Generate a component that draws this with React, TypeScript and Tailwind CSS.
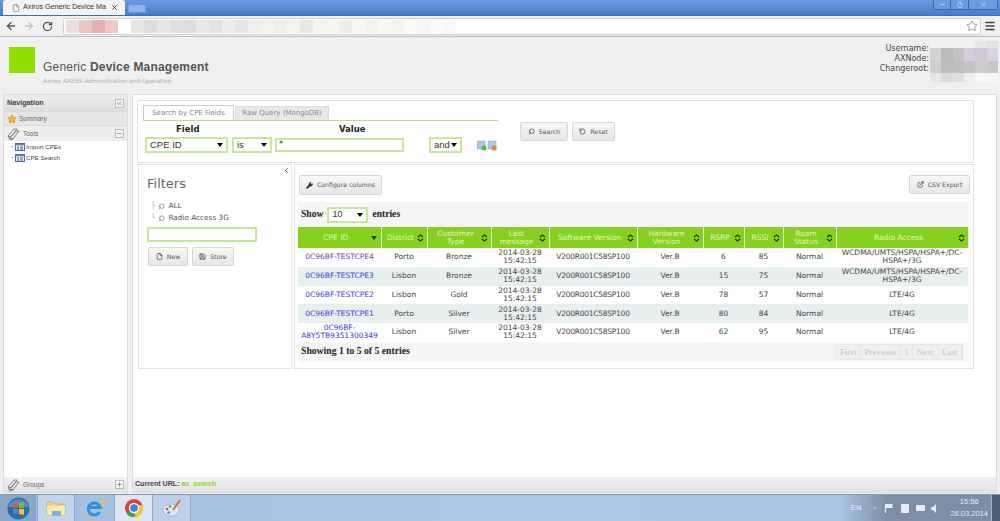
import { ArrowLeft, ArrowRight, RotateCw, Star, Search, RotateCcw, Wrench, File, Save, ExternalLink, Menu, Minus, Plus, ChevronsLeft, ChevronLeft, X, ChevronUp } from "lucide-react"

const rows = [
  { id: ["0C96BF-TESTCPE4"], district: "Porto", type: "Bronze", rsrp: "6", rssi: "85", radio: ["WCDMA/UMTS/HSPA/HSPA+/DC-", "HSPA+/3G"], visited: true },
  { id: ["0C96BF-TESTCPE3"], district: "Lisbon", type: "Bronze", rsrp: "15", rssi: "75", radio: ["WCDMA/UMTS/HSPA/HSPA+/DC-", "HSPA+/3G"] },
  { id: ["0C96BF-TESTCPE2"], district: "Lisbon", type: "Gold", rsrp: "78", rssi: "57", radio: ["LTE/4G"] },
  { id: ["0C96BF-TESTCPE1"], district: "Porto", type: "Silver", rsrp: "80", rssi: "84", radio: ["LTE/4G"] },
  { id: ["0C96BF-", "A8Y5TB9351300349"], district: "Lisbon", type: "Silver", rsrp: "62", rssi: "95", radio: ["LTE/4G"] },
]

const columns = [
  { label: ["CPE ID"], w: "w-[83px]", sorted: true },
  { label: ["District"], w: "w-[46px]" },
  { label: ["Customer", "Type"], w: "w-[64px]" },
  { label: ["Last", "message"], w: "w-[58px]" },
  { label: ["Software Version"], w: "w-[88px]" },
  { label: ["Hardware", "Version"], w: "w-[66px]" },
  { label: ["RSRP"], w: "w-[41px]" },
  { label: ["RSSI"], w: "w-[39px]" },
  { label: ["Roam", "Status"], w: "w-[53px]" },
  { label: ["Radio Access"], w: "w-[132px]" },
]

// blurred address in the url bar
const urlBlur = ["#ecdcdc", "#ecc4c4", "#e4b0b4", "#eccaca", "#ffffff", "#e6e6e4", "#dcdcda", "#e6e6e4", "#dededc", "#dcdcda", "#e8e8e6", "#e2e2e0", "#eeedea", "#e6e6e4", "#f0efec", "#f3f2ee", "#eeeeea", "#f4f3f0", "#e8e8e4", "#f4f4f0", "#f6f5f2", "#eeeeea", "#f8f7f4", "#f2f2ee", "#f8f8f4", "#f4f4f0", "#fafaf6", "#f6f6f2", "#fafaf8", "#f8f8f6"]
// blurred account values in the header
const userBlur = [
  "#f0f0f0", "#f0f0f0", "#eeeeee", "#f0f0f0", "#e8e8e8", "#e2e2e2",
  "#d4d4d4", "#bcbabc", "#c4c2c4", "#d4ccda", "#cfc6d8", "#d8d3de",
  "#d0ced0", "#bebcbe", "#c0bec0", "#c4c4c4", "#cccacc", "#c8c6c8",
  "#e6e6e6", "#dcdcdc", "#dedede", "#efefef", "#f6f6f6", "#f6f6f6",
]

function Sort({ down }: { down?: boolean }) {
  if (down) return <span className="absolute right-[4px] top-1/2 -mt-[2px] w-0 h-0 border-x-[3px] border-x-transparent border-t-[4px] border-t-[#1f3300]" />
  return (
    <svg className="absolute right-[3px] top-1/2 -mt-[4px]" width="7" height="8" viewBox="0 0 7 8" fill="none" stroke="#1f3300" strokeWidth="1.3">
      <path d="M1 3l2.500-2L6 3M1 5l2.500 2L6 5" />
    </svg>
  )
}

function Caret() {
  return <span className="w-0 h-0 border-x-[3px] border-x-transparent border-t-[4px] border-t-black" />
}

function Select({ label, w }: { label: string; w: string }) {
  return (
    <div className={`${w} h-[16px] border-2 border-[#c5e89a] bg-white flex items-center justify-between pl-[3px] pr-[3px] font-['Liberation_Sans',sans-serif] text-[9.5px] text-[#333]`}>
      {label}
      <Caret />
    </div>
  )
}

function Button({ icon, label, w, h = "h-[19px]" }: { icon: React.ReactNode; label: string; w: string; h?: string }) {
  return (
    <div className={`${w} ${h} whitespace-nowrap rounded-[2px] border border-[#d8d8d8] bg-gradient-to-b from-[#f8f8f8] to-[#e6e6e6] flex items-center justify-center gap-[4px] text-[6.2px] text-[#555]`}>
      {icon}
      {label}
    </div>
  )
}

function Lens() {
  return <Search size={7} className="-scale-x-100 text-[#666]" />
}

function NavIcon() {
  return (
    <svg width="14" height="14" viewBox="0 0 14 14" fill="none" stroke="#777" strokeWidth="0.9">
      <path d="M1 9l6-7 3 0-6 8zM3 11l6-7 3 0-6 8zM1 9l2 4 3-1" />
    </svg>
  )
}

function DocIcon() {
  return (
    <svg width="10" height="8" viewBox="0 0 10 8">
      <rect x="0.5" y="0.5" width="9" height="7" fill="#eef3fa" stroke="#4a6fa5" />
      <rect x="1" y="1" width="8" height="1.300" fill="#5a86c0" />
      <path d="M2 4h2M5 4h3M2 6h2M5 6h3" stroke="#445" strokeWidth="0.9" />
    </svg>
  )
}

export default function App() {
  return (
    <div className="w-[1000px] h-[521px] overflow-hidden flex flex-col bg-[#f0f0f0] font-['DejaVu_Sans',sans-serif]">
      {/* chrome tabs */}
      <div className="h-[15px] shrink-0 flex items-end bg-gradient-to-b from-[#6a9ae0] to-[#4a7cc8] relative">
        <div className="ml-[3px] w-[122px] h-[15px] bg-[#f4f4f4] rounded-t-[3px] flex items-center pl-[9px] pr-[4px] text-[#333] gap-[3px] whitespace-nowrap">
          <File size={8} className="shrink-0 text-[#777]" />
          <span className="font-['Liberation_Sans',sans-serif] text-[7.2px] w-[85px] shrink-0">Axiros Generic Device Ma</span>
          <X size={7} strokeWidth={3} className="shrink-0 text-[#333]" />
        </div>
        <div className="ml-[3px] mb-[2px] w-[18px] h-[9px] bg-[#8fb4ea] border border-[#6c94d4] rounded-t-[2px]" />
        <div className="ml-auto mr-[2px] h-[10px] self-start flex border border-[#3c66a8] border-t-0 rounded-b-[2px] bg-[#6d9bdf] text-[#e8f0fb]">
          <div className="w-[17px] flex items-center justify-center border-r border-[#3c66a8]"><Minus size={7} /></div>
          <div className="w-[18px] flex items-center justify-center border-r border-[#3c66a8]"><File size={6} /></div>
          <div className="w-[28px] flex items-center justify-center"><X size={7} /></div>
        </div>
      </div>
      {/* chrome toolbar */}
      <div className="h-[22px] shrink-0 bg-[#f1f1f1] border-b border-[#bcbcbc] border-t border-t-[#3f6bb0] flex items-center pl-[4px] pr-[4px]">
        <ArrowLeft size={12} strokeWidth={2.6} className="text-[#555] ml-[1px]" />
        <ArrowRight size={12} strokeWidth={2.6} className="text-[#c4c4c4] ml-[6px]" />
        <RotateCw size={11} strokeWidth={2.6} className="text-[#555] ml-[7px]" />
        <div className="ml-[10px] w-[918px] h-[17px] bg-white border border-[#d0d0d0] rounded-[2px] flex items-center pr-[2px] relative">
          <div className="flex h-[13px] ml-[2px]">
            {urlBlur.map((c, i) => <div key={i} className="w-[13px] h-full" style={{ background: c }} />)}
          </div>
          <Star size={12} className="ml-auto text-[#999]" />
        </div>
        <Menu size={12} strokeWidth={3} className="ml-auto text-[#444]" />
      </div>
      {/* app header */}
      <div className="h-[57px] shrink-0 flex pl-[9px] pt-[10px] relative">
        <div className="w-[26px] h-[26px] bg-[#8fdf00]" />
        <div className="ml-[8px] pt-[13px]">
          <div className="text-[12px] leading-[14px] text-[#555] font-['Liberation_Sans',sans-serif] tracking-[0.2px]">Generic <span className="font-bold">Device Management</span></div>
          <div className="text-[5.9px] leading-[9px] mt-[3px] text-[#aaa]">Axiros AXESS Administration and Operation</div>
        </div>
        <div className="ml-auto mr-[2px] -mt-[6px] flex">
          <div className="text-right text-[8px] leading-[10px] text-[#444] pt-[3px]">
            <div>Username:</div>
            <div>AXNode:</div>
            <div>Changeroot:</div>
          </div>
          <div className="ml-[1px] w-[68px] h-[41px] grid grid-cols-6 grid-rows-[7px_13px_12px_9px]">
            {userBlur.map((c, i) => <div key={i} style={{ background: c }} />)}
          </div>
        </div>
      </div>
      {/* body */}
      <div className="h-[399px] shrink-0 flex pl-[3px] pr-[3px] gap-[4px]">
        {/* sidebar */}
        <div className="w-[125px] flex flex-col border border-[#dcdcdc] bg-white font-['Liberation_Sans',sans-serif]">
          <div className="h-[16px] bg-gradient-to-b from-[#eeeeee] to-[#dddddd] flex items-center justify-between pl-[3px] pr-[3px] text-[7.2px] font-bold text-[#444]">
            Navigation
            <span className="w-[9px] h-[9px] border border-[#bbb] bg-[#f4f4f4] flex items-center justify-center"><ChevronsLeft size={7} className="text-[#666]" /></span>
          </div>
          <div className="h-[15px] bg-[#e6e6e6] border-y border-[#dadada] flex items-center gap-[2px] pl-[3px] text-[6.5px] text-[#666]">
            <Star size={10} fill="#f5b82e" className="text-[#d99a1c]" />
            Summary
          </div>
          <div className="h-[15px] bg-[#eeeeee] flex items-center gap-[2px] pl-[3px] pr-[3px] text-[6.5px] text-[#666]">
            <NavIcon />
            Tools
            <span className="ml-auto w-[9px] h-[9px] border border-[#bbb] bg-[#f4f4f4] flex items-center justify-center"><Minus size={7} className="text-[#666]" /></span>
          </div>
          <div className="pl-[6px] text-[6.2px] text-[#444] leading-[11px]">
            <div className="flex items-center gap-[1px]"><span className="w-[4px] h-[1px] bg-[#ccc]" /><DocIcon /> Import CPEs</div>
            <div className="flex items-center gap-[1px]"><span className="w-[4px] h-[1px] bg-[#ccc]" /><DocIcon /> CPE Search</div>
          </div>
          <div className="mt-auto h-[15px] bg-gradient-to-b from-[#f2f2f2] to-[#e2e2e2] flex items-center gap-[2px] pl-[3px] pr-[3px] text-[6.5px] text-[#666]">
            <NavIcon />
            Groups
            <span className="ml-auto w-[9px] h-[9px] border border-[#bbb] bg-[#f4f4f4] flex items-center justify-center"><Plus size={7} className="text-[#666]" /></span>
          </div>
        </div>
        {/* main */}
        <div className="flex-1 flex flex-col border border-[#dcdcdc] bg-white">
          <div className="flex-1 pl-[4px] pt-[5px]">
            {/* search box */}
            <div className="w-[837px] h-[63px] border border-[#e0e0e0] rounded-[2px] pl-[5px] pt-[5px] relative">
              <div className="w-[355px] flex items-end h-[15px] border-b border-[#b5e27a] text-[7px] text-[#888]">
                <div className="w-[91px] h-[15px] border border-[#ccc] border-b-0 flex items-center justify-center bg-white">Search by CPE Fields</div>
                <div className="ml-[1px] w-[94px] h-[14px] bg-[#e8e8e8] border border-[#ddd] border-b-0 flex items-center justify-center">Raw Query (MongoDB)</div>
              </div>
              <div className="flex text-[8.5px] font-bold text-[#222] leading-[12px] mt-[2px]">
                <div className="w-[85px] pl-[33px]">Field</div>
                <div className="ml-[111px]">Value</div>
              </div>
              <div className="flex items-center mt-[2px] ml-[2px]">
                <Select label="CPE ID" w="w-[83px]" />
                <div className="ml-[4px]"><Select label="is" w="w-[40px]" /></div>
                <div className="ml-[3px] w-[129px] h-[14px] border-2 border-[#c5e89a] text-[8px] leading-[10px] pl-[2px] text-[#333]">*</div>
                <div className="ml-[25px]"><Select label="and" w="w-[33px]" /></div>
                <svg className="ml-[15px]" width="20" height="11" viewBox="0 0 20 11">
                  <rect x="0" y="1" width="8" height="8" fill="#a9c6e8" stroke="#7da0cc" strokeWidth="0.5" />
                  <rect x="11" y="1" width="8" height="8" fill="#a9c6e8" stroke="#7da0cc" strokeWidth="0.5" />
                  <circle cx="7" cy="8" r="2.500" fill="#6ab33a" />
                  <circle cx="17" cy="8" r="2.500" fill="#e8843a" />
                </svg>
              </div>
              <div className="absolute left-[382px] top-[21px] flex gap-[4px]">
                <Button w="w-[48px]" label="Search" icon={<Search size={7} className="-scale-x-100 text-[#222]" />} />
                <Button w="w-[43px]" label="Reset" icon={<RotateCcw size={7} className="text-[#222]" />} />
              </div>
            </div>
            <div className="flex mt-[1px] h-[205px]">
              {/* filters */}
              <div className="w-[154px] ml-[1px] border border-[#e4e4e4] pl-[8px] pt-[11px] relative">
                <ChevronLeft size={7} strokeWidth={3} className="absolute right-[1px] top-[2px] text-[#222]" />
                <div className="text-[13px] leading-[16px] text-[#666]">Filters</div>
                <div className="mt-[8px] ml-[4px] text-[7.3px] leading-[12px] text-[#555]">
                  <div className="flex items-center gap-[3px]"><span className="text-[#aaa]">├</span><Lens /> ALL</div>
                  <div className="flex items-center gap-[3px]"><span className="text-[#aaa]">└</span><Lens /> Radio Access 3G</div>
                </div>
                <div className="mt-[3px] w-[110px] h-[15px] border-2 border-[#c5e89a]" />
                <div className="flex mt-[5px] gap-[4px] ml-[1px]">
                  <Button w="w-[40px]" label="New" icon={<File size={7} className="text-[#222]" />} />
                  <Button w="w-[42px]" label="Store" icon={<Save size={7} className="text-[#222]" />} />
                </div>
              </div>
              {/* table panel */}
              <div className="w-[680px] ml-[2px] border border-[#e4e4e4] pl-[3px] pt-[10px]">
                <div className="flex justify-between pl-[1px] pr-[3px]">
                  <Button w="w-[83px]" h="h-[20px]" label="Configure columns" icon={<Wrench size={7} fill="#222" className="text-[#222]" />} />
                  <Button w="w-[61px]" label="CSV Export" icon={<ExternalLink size={7} className="text-[#222]" />} />
                </div>
                <div className="mt-[7px] w-[670px] bg-[#f5f5f5]">
                  <div className="h-[25px] flex items-center pl-[3px] font-['Liberation_Serif',serif] font-bold text-[9.6px] text-[#222]">
                    Show
                    <div className="mx-[4px] w-[41px] h-[16px] border-2 border-[#c5e89a] bg-white flex items-center justify-between pl-[3px] pr-[3px] text-[9px] font-normal font-['Liberation_Sans',sans-serif] text-[#333]">10<Caret /></div>
                    entries
                  </div>
                  <table className="table-fixed border-collapse w-[670px] text-[7.5px] text-[#444] text-center">
                    <thead>
                      <tr className="h-[21px] text-[#e2f5c0]">
                        {columns.map((c, i) => (
                          <th key={i} className={`${c.w} relative bg-[#86d11f] border-r border-[#e8f5d4] font-normal leading-[8px] pr-[7px]`}>
                            {c.label.map((l) => <div key={l}>{l}</div>)}
                            <Sort down={c.sorted} />
                          </th>
                        ))}
                      </tr>
                    </thead>
                    <tbody>
                      {rows.map((r, i) => (
                        <tr key={i} className={`h-[18.750px] leading-[8px] ${i % 2 ? "bg-[#e7f0ef]" : "bg-white"}`}>
                          <td className={r.visited ? "text-[#7a3fa0]" : "text-[#3a3ad8]"}>{r.id.map((l) => <div key={l}>{l}</div>)}</td>
                          <td>{r.district}</td>
                          <td>{r.type}</td>
                          <td><div>2014-03-28</div><div>15:42:15</div></td>
                          <td className="tracking-[-0.25px]">V200R001C58SP100</td>
                          <td>Ver.B</td>
                          <td>{r.rsrp}</td>
                          <td>{r.rssi}</td>
                          <td>Normal</td>
                          <td>{r.radio.map((l) => <div key={l}>{l}</div>)}</td>
                        </tr>
                      ))}
                    </tbody>
                  </table>
                  <div className="h-[20px] flex items-center justify-between pl-[3px] pr-[5px] font-['Liberation_Serif',serif]">
                    <span className="font-bold text-[9.7px] text-[#222]">Showing 1 to 5 of 5 entries</span>
                    <div className="flex h-[16px] text-[9px] text-[#c4c4c4] bg-[#f0f0f0] border border-[#e8e8e8]">
                      {["First", "Previous", "1", "Next", "Last"].map((p) => (
                        <span key={p} className="px-[3.500px] leading-[15px] border-r border-[#e8e8e8]">{p}</span>
                      ))}
                    </div>
                  </div>
                </div>
              </div>
            </div>
          </div>
          <div className="h-[15px] bg-gradient-to-b from-[#f2f2f2] to-[#e2e2e2] flex items-center pl-[2px] font-['Liberation_Sans',sans-serif] text-[7.100px] font-bold text-[#444]">
            Current URL:&nbsp;<span className="text-[#8fd32a]">ax_search</span>
          </div>
        </div>
      </div>
      <div className="flex-1 min-h-[1px] bg-[#f0f0f0]" />
      {/* windows taskbar */}
      <div className="h-[27px] shrink-0 flex items-stretch bg-gradient-to-r from-[#a4bfdf] via-[#adc6e4] to-[#a8c3e2] border-t border-[#7f97b5] relative">
        <div className="w-[36px] flex items-center justify-center bg-[#8ba7c7]">
          <svg width="23" height="23" viewBox="0 0 23 23">
            <circle cx="11.500" cy="11.500" r="11" fill="#2f6aa8" />
            <path d="M1 10a11 11 0 0 1 21 0z" fill="#7fb0dc" opacity="0.5" />
            <path d="M6 7l5-1v5H6z" fill="#e8552f" />
            <path d="M12 6l5-1v6h-5z" fill="#7dbb35" />
            <path d="M6 12h5v5l-5-1z" fill="#3d8fd8" />
            <path d="M12 12h5v6l-5-1z" fill="#f5c22b" />
          </svg>
        </div>
        <div className="flex ml-[1px]">
          <div className="w-[38px] flex items-center justify-center bg-[#c3d5ea] border-x border-[#8fa8c6]">
            <svg width="20" height="18" viewBox="0 0 20 18">
              <path d="M1 3h6l2 2h10v11H1z" fill="#f2d27a" stroke="#c9a44a" strokeWidth="0.7" />
              <rect x="1" y="7" width="18" height="9" fill="#fbeab0" />
              <rect x="6" y="12" width="9" height="5" rx="1" fill="#7fb2d8" />
            </svg>
          </div>
          <div className="w-[39px] flex items-center justify-center">
            <svg width="21" height="21" viewBox="0 0 21 21" fill="none">
              <path d="M3 15.500C1 20 6 18.500 10 16M13 3c4-2 8-2.500 7 1.500-.4 1.700-1.500 3.500-3 5" stroke="#f0b72a" strokeWidth="1.200" />
              <path d="M15.500 14a6 6 0 1 1 .6-4.500H6" stroke="#2b8fe0" strokeWidth="3" />
            </svg>
          </div>
          <div className="w-[39px] flex items-center justify-center bg-[#dbe6f2] border-x border-[#8fa8c6]">
            <svg width="20" height="20" viewBox="0 0 20 20">
              <circle cx="10" cy="10" r="9" fill="#d8403a" />
              <path d="M10 10L2 14.500A9 9 0 0 0 11 19z" fill="#3da544" />
              <path d="M10 10l1 9A9 9 0 0 0 18.500 7H10z" fill="#f5c72f" />
              <circle cx="10" cy="10" r="4.500" fill="#3b7de0" stroke="#fff" strokeWidth="1.300" />
            </svg>
          </div>
          <div className="w-[38px] flex items-center justify-center bg-[#bdd0e7] border-r border-[#8fa8c6]">
            <svg width="20" height="18" viewBox="0 0 20 18">
              <ellipse cx="9" cy="11" rx="8" ry="6" fill="#dfe8f2" stroke="#8fa3bd" strokeWidth="0.6" />
              <circle cx="5" cy="10" r="1.300" fill="#d8403a" />
              <circle cx="8" cy="7.500" r="1.300" fill="#3da544" />
              <circle cx="6.500" cy="13.500" r="1.300" fill="#3b7de0" />
              <path d="M11 11L18 1" stroke="#c87a30" strokeWidth="2" />
            </svg>
          </div>
        </div>
        <div className="ml-auto w-[160px] flex items-center bg-gradient-to-r from-transparent to-[#7c8ea3] to-30% text-[#e6edf5] font-['Liberation_Sans',sans-serif]">
          <span className="ml-[11px] text-[7.500px]">EN</span>
          <ChevronUp size={6} strokeWidth={3} className="ml-[11px]" />
          <svg className="ml-[6px]" width="54" height="11" viewBox="0 0 54 11" fill="#e6edf5">
            <path d="M1 1h1v9H1zM2 1h7l-1 2 1 2H2z" />
            <rect x="17" y="1" width="8" height="9" rx="1" />
            <rect x="32" y="2" width="9" height="6" rx="1" />
            <path d="M47 4h2l3-3v9l-3-3h-2z" />
          </svg>
          <div className="ml-[12px] mr-auto text-[7.500px] leading-[12px] text-center">
            <div>15:56</div>
            <div>28.03.2014</div>
          </div>
          <div className="w-[9px] h-full bg-[#4f5f72] border-l border-[#a7b5c6]" />
        </div>
      </div>
    </div>
  )
}
